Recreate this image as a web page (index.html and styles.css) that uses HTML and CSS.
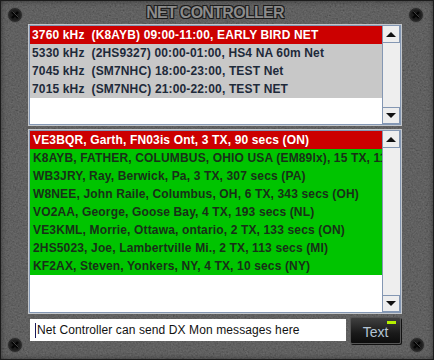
FILE: index.html
```html
<!DOCTYPE html>
<html lang="en">
<head>
    <meta charset="UTF-8">
    <title>Net Controller</title>
    <link rel="stylesheet" href="styles.css">
</head>
<body>

    <svg width="0" height="0" class="defs">
        <symbol id="screw" viewBox="0 0 16 16">
            <circle cx="8" cy="8" r="7.5" fill="#2a2a2a" stroke="#5a5a5a"/>
            <circle cx="8" cy="8" r="5.5" fill="#1d1d1d"/>
            <path d="M5 5 L11 11 M11 5 L5 11" stroke="#050505" stroke-width="2.4"/>
            <path d="M5.5 4.5 L11.5 10.5" stroke="#6a6a6a" stroke-width="0.6"/>
        </symbol>
    </svg>

    <div class="panel">
        <svg class="screw tl"><use href="#screw"/></svg>
        <svg class="screw tr"><use href="#screw"/></svg>
        <svg class="screw bl"><use href="#screw"/></svg>
        <svg class="screw br"><use href="#screw"/></svg>

        <h1 class="title">NET CONTROLLER</h1>

        <div class="list nets">
            <ul class="rows">
                <li class="row sel">3760 kHz&nbsp;&nbsp;(K8AYB) 09:00-11:00, EARLY BIRD NET</li>
                <li class="row grey">5330 kHz&nbsp;&nbsp;(2HS9327) 00:00-01:00, HS4 NA 60m Net</li>
                <li class="row grey">7045 kHz&nbsp;&nbsp;(SM7NHC) 18:00-23:00, TEST Net</li>
                <li class="row grey">7015 kHz&nbsp;&nbsp;(SM7NHC) 21:00-22:00, TEST NET</li>
            </ul>
            <div class="scrollbar">
                <span class="arrow up"></span>
                <span class="track"></span>
                <span class="arrow down"></span>
            </div>
        </div>

        <div class="list stations">
            <ul class="rows">
                <li class="row sel">VE3BQR, Garth, FN03is Ont, 3 TX, 90 secs (ON)</li>
                <li class="row green">K8AYB, FATHER, COLUMBUS, OHIO USA (EM89lx), 15 TX, 1139 secs (OH)</li>
                <li class="row green">WB3JRY, Ray, Berwick, Pa, 3 TX, 307 secs (PA)</li>
                <li class="row green">W8NEE, John Raile, Columbus, OH, 6 TX, 343 secs (OH)</li>
                <li class="row green">VO2AA, George, Goose Bay, 4 TX, 193 secs (NL)</li>
                <li class="row green">VE3KML, Morrie, Ottawa, ontario, 2 TX, 133 secs (ON)</li>
                <li class="row green">2HS5023, Joe, Lambertville Mi., 2 TX, 113 secs (MI)</li>
                <li class="row green">KF2AX, Steven, Yonkers, NY, 4 TX, 10 secs (NY)</li>
            </ul>
            <div class="scrollbar">
                <span class="arrow up"></span>
                <span class="track"></span>
                <span class="arrow down"></span>
            </div>
        </div>

        <div class="send">
            <div class="message"><span class="caret"></span>Net Controller can send DX Mon messages here</div>
            <button class="text-btn">Text<span class="led"></span></button>
        </div>
    </div>

</body>
</html>
```

FILE: styles.css
```css
body {
    margin: 0;
    font-family: "Liberation Sans", Arial, sans-serif;
    background: #2b2b2b;
}

.defs {
    position: absolute;
}

.panel {
    position: relative;
    box-sizing: border-box;
    width: 434px;
    height: 360px;
    padding: 0 33px 0 29px;
    display: flex;
    flex-direction: column;
    background-color: #2e2e2e;
    background-image: url("data:image/svg+xml,%3Csvg xmlns='http://www.w3.org/2000/svg' width='220' height='220'%3E%3Cfilter id='n'%3E%3CfeTurbulence type='fractalNoise' baseFrequency='0.6' numOctaves='3' seed='4'/%3E%3CfeColorMatrix values='0.33 0.33 0.33 0 0 0.33 0.33 0.33 0 0 0.33 0.33 0.33 0 0 0 0 0 0 0.36'/%3E%3C/filter%3E%3Crect width='100%25' height='100%25' filter='url(%23n)'/%3E%3C/svg%3E");
    box-shadow: inset 0 0 0 1px #1c1c1c, inset 0 0 6px rgba(0, 0, 0, 0.6);
}

/* screws in the corners */
.screw {
    position: absolute;
    width: 16px;
    height: 16px;
}
.screw.tl { left: 7px; top: 7px; }
.screw.tr { left: 408px; top: 7px; }
.screw.bl { left: 7px; top: 337px; }
.screw.br { left: 409px; top: 337px; }

.title {
    margin: 0;
    height: 25px;
    line-height: 26px;
    text-align: center;
    font-size: 16px;
    font-weight: bold;
    letter-spacing: -0.7px;
    color: #8c8c8c;
    text-shadow: -1px -1px 0 #1a1a1a, 1px 1px 0 #1a1a1a, 1px -1px 0 #222, -1px 1px 0 #222;
}

.list {
    display: flex;
    border: 1px solid #8497b3;
    box-shadow: 0 0 0 1px #c4c8cc;
    background: #fff;
}

.nets {
    height: 98px;
}

.stations {
    height: 181px;
    margin-top: 5px;
}

.rows {
    flex: 1;
    min-width: 0;
    margin: 0;
    padding: 0;
    list-style: none;
}

.row {
    height: 18px;
    line-height: 19px;
    padding-left: 2px;
    font-size: 12px;
    font-weight: bold;
    letter-spacing: 0.15px;
    white-space: nowrap;
    overflow: hidden;
    color: #1e2a3a;
}

.stations .row {
    padding-left: 3px;
}

.row.sel {
    background: #cc0000;
    color: #fff;
}

.row.grey {
    background: #c8c8c8;
}

.row.green {
    background: #00c400;
    color: #183018;
}

.scrollbar {
    width: 17px;
    display: flex;
    flex-direction: column;
    border-left: 1px solid #8497b3;
    background: #eeeeee;
}

.arrow {
    height: 17px;
    box-sizing: border-box;
    border: 1px solid #8497b3;
    border-left: none;
    background: #eeeeee;
    display: flex;
    align-items: center;
    justify-content: center;
}

.arrow::after {
    content: "";
    border-left: 5px solid transparent;
    border-right: 5px solid transparent;
}

.arrow.up::after {
    border-bottom: 5px solid #111;
}

.arrow.down::after {
    border-top: 5px solid #111;
}

.arrow.up {
    border-top: none;
}

.track {
    flex: 1;
}

.send {
    display: flex;
    gap: 4px;
    margin-top: 4px;
    height: 27px;
}

.message {
    flex: 1;
    margin: 2px 0 3px 1px;
    padding-left: 5px;
    display: flex;
    align-items: center;
    background: #fff;
    font-size: 12px;
    letter-spacing: 0.1px;
    color: #111;
    white-space: nowrap;
}

.caret {
    width: 1px;
    height: 15px;
    margin-right: 1px;
    background: #1a1a5a;
}

.text-btn {
    position: relative;
    width: 51px;
    padding: 2px 0 0;
    border: 1px solid #555;
    border-radius: 2px;
    background: linear-gradient(#404040, #1a1a1a 60%, #0c0c0c);
    box-shadow: 1px 1px 0 #111;
    font-family: "Liberation Sans", Arial, sans-serif;
    font-size: 14px;
    color: #b4c4d4;
}

.led {
    position: absolute;
    right: 4px;
    top: 3px;
    width: 9px;
    height: 3px;
    background: #b6f000;
}
```
